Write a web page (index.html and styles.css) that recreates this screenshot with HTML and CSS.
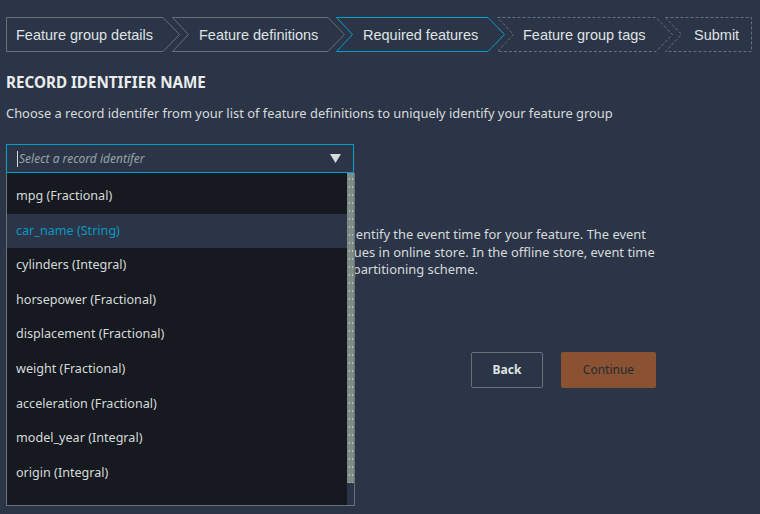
FILE: index.html
```html
<!DOCTYPE html>
<html lang="en">
<head>
<meta charset="utf-8">
<title>Required features</title>
<link rel="stylesheet" href="styles.css">
</head>
<body>
<nav class="steps">
  <div class="step step-1 done">
    <svg class="step-shape" width="174" height="35" viewBox="0 0 174 35"><polygon points="0.5,0.5 157,0.5 173.5,17.5 157,34.5 0.5,34.5"/></svg>
    <span class="step-label">Feature group details</span>
  </div>
  <div class="step step-2 done">
    <svg class="step-shape" width="173" height="35" viewBox="0 0 173 35"><polygon points="0.5,0.5 156,0.5 172.5,17.5 156,34.5 0.5,34.5 16.5,17.5"/></svg>
    <span class="step-label">Feature definitions</span>
  </div>
  <div class="step step-3 current">
    <svg class="step-shape" width="169" height="35" viewBox="0 0 169 35"><polygon points="0.5,0.5 152,0.5 168.5,17.5 152,34.5 0.5,34.5 16.5,17.5"/></svg>
    <span class="step-label">Required features</span>
  </div>
  <div class="step step-4 todo">
    <svg class="step-shape" width="176" height="35" viewBox="0 0 176 35"><polygon points="0.5,0.5 159,0.5 175.5,17.5 159,34.5 0.5,34.5 16.5,17.5"/></svg>
    <span class="step-label">Feature group tags</span>
  </div>
  <div class="step step-5 todo">
    <svg class="step-shape" width="87" height="35" viewBox="0 0 87 35"><polygon points="0.5,0.5 86.5,0.5 86.5,34.5 0.5,34.5 16.5,17.5"/></svg>
    <span class="step-label">Submit</span>
  </div>
</nav>

<main class="content">
  <section class="field field-record">
    <h2 class="field-title">RECORD IDENTIFIER NAME</h2>
    <p class="field-desc">Choose a record identifer from your list of feature definitions to uniquely identify your feature group</p>
    <div class="select-wrap">
      <div class="select is-open">
        <span class="caret"></span>
        <span class="placeholder">Select a record identifer</span>
        <svg class="arrow" width="11" height="9" viewBox="0 0 11 9"><polygon points="0,0 11,0 5.5,9"/></svg>
      </div>
      <div class="dropdown">
        <ul class="options">
          <li class="option">mpg (Fractional)</li>
          <li class="option is-active">car_name (String)</li>
          <li class="option">cylinders (Integral)</li>
          <li class="option">horsepower (Fractional)</li>
          <li class="option">displacement (Fractional)</li>
          <li class="option">weight (Fractional)</li>
          <li class="option">acceleration (Fractional)</li>
          <li class="option">model_year (Integral)</li>
          <li class="option">origin (Integral)</li>
        </ul>
        <div class="scrollbar"><div class="thumb"></div></div>
      </div>
    </div>
  </section>

  <section class="field field-event">
    <h2 class="field-title">EVENT TIME FEATURE NAME</h2>
    <p class="field-desc event-desc">Choose a feature name from your feature definitions to identify the event time for your feature. The event<br>time. The event time is used to determine the freshest values in online store. In the offline store, event time<br>is used as the key which determines the offline store's S3 partitioning scheme.</p>
    <div class="select">
      <span class="placeholder">Select an event time feature</span>
      <svg class="arrow" width="11" height="9" viewBox="0 0 11 9"><polygon points="0,0 11,0 5.5,9"/></svg>
    </div>
  </section>

  <div class="actions">
    <button class="btn btn-back" type="button">Back</button>
    <button class="btn btn-continue" type="button" disabled>Continue</button>
  </div>
</main>
</body>
</html>
```

FILE: styles.css
```css
* { box-sizing: border-box; }

html, body {
  margin: 0;
  padding: 0;
  background: #2c3547;
  width: 760px;
  height: 514px;
  overflow: hidden;
}

body {
  padding: 17px 6px 0 6px;
  font-family: "Noto Sans", "Open Sans", sans-serif;
  color: #d5dbdb;
}

/* ---------- steps ---------- */
.steps {
  display: flex;
  height: 35px;
}

.step {
  position: relative;
  flex: none;
  height: 35px;
  display: flex;
  align-items: center;
  padding-left: 27px;
  font-family: "Liberation Sans", Arial, sans-serif;
  font-size: 14.5px;
  color: #dfe3e3;
  white-space: nowrap;
}

.step + .step { margin-left: -8px; }

.step-shape {
  position: absolute;
  left: 0;
  top: 0;
}

.step-shape polygon {
  fill: none;
  stroke: #687078;
  stroke-width: 1;
}

.step-label { position: relative; }

.step-1 { width: 174px; padding-left: 10px; }
.step-2 { width: 173px; }
.step-3 { width: 169px; margin-left: -9px !important; }
.step-4 { width: 176px; padding-left: 26px; }
.step-5 { width: 87px; padding-left: 29px; }

.current .step-shape polygon { stroke: #00a1c9; }
.todo .step-shape polygon { stroke-dasharray: 3 2; }

/* ---------- content ---------- */
.content {
  width: 650px;
}

.field-title {
  margin: 21px 0 0 0;
  font-size: 15.2px;
  line-height: 18px;
  font-weight: 700;
  color: #eaeded;
}

.field-desc {
  margin: 13px 0 0 0;
  font-size: 12.9px;
  line-height: 18px;
  color: #d5dbdb;
}

.select-wrap {
  position: relative;
  width: 348px;
  margin-top: 22px;
}

.select {
  position: relative;
  display: flex;
  align-items: center;
  height: 29px;
  width: 348px;
  border: 1px solid #687078;
  padding: 0 12px 0 10px;
}

.select.is-open { border-color: #00a1c9; }

.caret {
  width: 1px;
  height: 16px;
  background: #d5dbdb;
  margin-right: 1px;
}

.placeholder {
  flex: 1;
  font-style: italic;
  font-size: 12px;
  color: #95a5a6;
}

.arrow polygon { fill: #d5dbdb; }

/* ---------- dropdown ---------- */
.dropdown {
  position: absolute;
  left: 0;
  top: 29px;
  width: 349px;
  height: 333px;
  display: flex;
  background: #16191f;
  border: 1px solid #687078;
  border-top: none;
  z-index: 5;
}

.options {
  list-style: none;
  margin: 0;
  padding: 6px 0 0 0;
  flex: 1;
}

.option {
  height: 34.6px;
  line-height: 34.6px;
  padding-left: 9px;
  font-size: 12.6px;
  color: #d5dbdb;
}

.option.is-active {
  background: #2c3547;
  color: #0a98c0;
}

.scrollbar {
  width: 7px;
  background: #2c3547;
}

.thumb {
  height: 310px;
  background-color: #7d8b88;
  background-image: radial-gradient(circle, #b9c3c0 0.6px, transparent 0.9px);
  background-size: 3px 8px;
  background-position: 1px 2px;
}

/* ---------- second field (under dropdown) ---------- */
.field-event .field-title { margin-top: 22px; }
.field-event .field-desc { margin-top: 13px; line-height: 17.5px; white-space: nowrap; }
.field-event .select { margin-top: 12px; }

/* ---------- actions ---------- */
.actions {
  display: flex;
  justify-content: flex-end;
  gap: 18px;
  margin-top: 32px;
  width: 650px;
}

.btn {
  height: 36px;
  font-family: "Noto Sans", "Open Sans", sans-serif;
  font-size: 12px;
  border-radius: 2px;
  cursor: pointer;
}

.btn-back {
  width: 72px;
  background: transparent;
  border: 1px solid #687078;
  color: #dfe3e3;
  font-weight: 700;
}

.btn-continue {
  width: 95px;
  background: #8a5230;
  border: none;
  color: #232b38;
}
```
